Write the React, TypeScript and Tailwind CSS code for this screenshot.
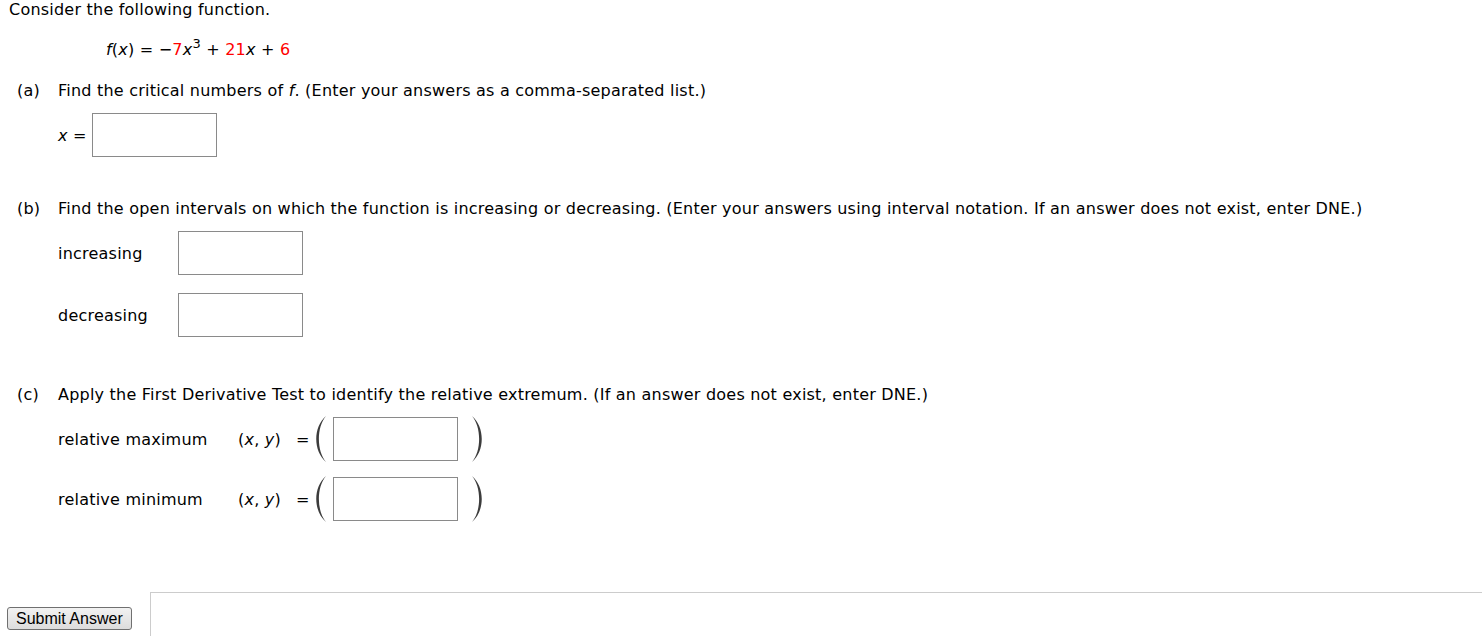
import React from 'react';

const font = { fontFamily: '"DejaVu Sans", Verdana, sans-serif' };

const AnswerBox: React.FC = () => (
  <div className="h-[44px] w-[125px] border border-[#8a8a8a] bg-white" />
);

const Paren: React.FC<{ side: 'left' | 'right' }> = ({ side }) => (
  <svg width="12" height="48" viewBox="0 0 12 48" className="shrink-0">
    {side === 'left' ? (
      <path d="M11 1 C-2 12 -2 36 11 47 C1.5 36 1.5 12 11 1 Z" fill="#3c3c3c" />
    ) : (
      <path d="M1 1 C14 12 14 36 1 47 C10.5 36 10.5 12 1 1 Z" fill="#3c3c3c" />
    )}
  </svg>
);

const PointRow: React.FC<{ label: string; className?: string }> = ({ label, className }) => (
  <div className={`flex h-[44px] items-center pl-[58px] ${className ?? ''}`}>
    <span className="relative top-[1px] w-[180px]">{label}</span>
    <span className="relative top-[1px] w-[58px]">
      (<i>x</i>, <i>y</i>)
    </span>
    <span className="relative top-[1px] w-[19px]">=</span>
    <div className="flex items-center">
      <Paren side="left" />
      <div className="ml-[6px]">
        <AnswerBox />
      </div>
      <div className="ml-[13px]">
        <Paren side="right" />
      </div>
    </div>
  </div>
);

export default function App() {
  return (
    <div
      className="relative h-[636px] w-[1482px] overflow-hidden bg-white text-[16px] leading-[20px] tracking-[0.22px] text-black"
      style={font}
    >
      <p className="pl-[9px]">Consider the following function.</p>

      <p className="mt-[20px] pl-[106px]">
        <i>f</i>(<i>x</i>) = −<span className="text-[#ff0000]">7</span>
        <i>x</i>
        <span className="relative top-[-7px] text-[13px] leading-none">3</span> +{' '}
        <span className="text-[#ff0000]">21</span>
        <i>x</i> + <span className="text-[#ff0000]">6</span>
      </p>

      <p className="mt-[21px] flex pl-[17px]">
        <span className="w-[41px]">(a)</span>
        <span>
          Find the critical numbers of <i>f</i>. (Enter your answers as a comma-separated list.)
        </span>
      </p>
      <div className="mt-[12px] flex items-center pl-[58px]">
        <span className="relative top-[1px] w-[34px]">
          <i>x</i> =
        </span>
        <AnswerBox />
      </div>

      <p className="mt-[42px] flex pl-[17px]">
        <span className="w-[41px]">(b)</span>
        <span>
          Find the open intervals on which the function is increasing or decreasing. (Enter your answers using interval notation. If an answer does not exist, enter DNE.)
        </span>
      </p>
      <div className="mt-[12px] flex items-center pl-[58px]">
        <span className="relative top-[1px] w-[120px]">increasing</span>
        <AnswerBox />
      </div>
      <div className="mt-[18px] flex items-center pl-[58px]">
        <span className="relative top-[1px] w-[120px]">decreasing</span>
        <AnswerBox />
      </div>

      <p className="mt-[48px] flex pl-[17px]">
        <span className="w-[41px]">(c)</span>
        <span>
          Apply the First Derivative Test to identify the relative extremum. (If an answer does not exist, enter DNE.)
        </span>
      </p>
      <PointRow label="relative maximum" className="mt-[12px]" />
      <PointRow label="relative minimum" className="mt-[16px]" />

      <div className="mt-[71px] flex">
        <div className="w-[150px] pl-[7px] pt-[15px]">
          <button
            className="h-[23px] rounded-[3px] border border-[#707070] bg-gradient-to-b from-[#f2f2f2] to-[#dcdcdc] px-[8px] text-[16px] leading-[19px] tracking-normal text-black"
            style={{ fontFamily: '"Liberation Sans", Arial, sans-serif' }}
          >
            Submit Answer
          </button>
        </div>
        <div className="h-[60px] flex-1 border-l border-t border-[#cccccc]" />
      </div>
    </div>
  );
}
